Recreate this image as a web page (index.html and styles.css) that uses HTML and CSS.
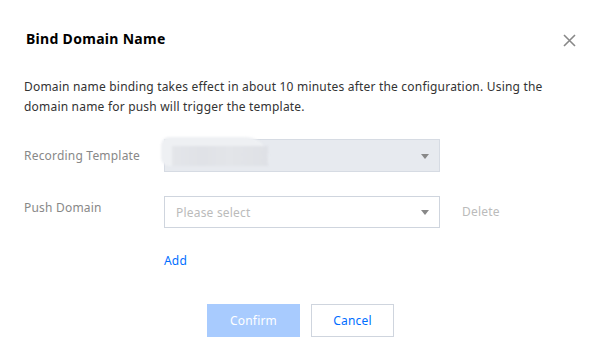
FILE: index.html
```html
<!DOCTYPE html>
<html>
<head>
<meta charset="utf-8">
<link rel="stylesheet" href="styles.css">
</head>
<body>
<div class="dialog">
  <div class="header">
    <h2 class="title">Bind Domain Name</h2>
    <button class="close" aria-label="Close">
      <svg width="13" height="13" viewBox="0 0 13 13"><path d="M1 1L12 12M12 1L1 12" stroke="#888" stroke-width="1.6" fill="none"/></svg>
    </button>
  </div>
  <p class="desc">Domain name binding takes effect in about 10 minutes after the configuration. Using the domain name for push will trigger the template.</p>
  <div class="form">
    <div class="row row-first">
      <div class="label label-first">Recording Template</div>
      <div class="select disabled">
        <span class="blur"><span class="blur-inner"></span></span>
        <span class="arrow"></span>
      </div>
    </div>
    <div class="row">
      <div class="label label-second">Push Domain</div>
      <div class="select">
        <span class="placeholder">Please select</span>
        <span class="arrow"></span>
      </div>
      <span class="delete">Delete</span>
    </div>
    <div class="row row-add">
      <div class="label"></div>
      <a class="add">Add</a>
    </div>
  </div>
  <div class="footer">
    <button class="btn btn-primary">Confirm</button>
    <button class="btn btn-default">Cancel</button>
  </div>
</div>
</body>
</html>
```
FILE: styles.css
```css
* { box-sizing: border-box; }
html, body { margin: 0; padding: 0; background: #fff; }
body { font-family: "Noto Sans", "Open Sans", sans-serif; font-size: 12px; color: #333; letter-spacing: 0.2px; }
.dialog { width: 604px; height: 364px; padding: 28px 24px 0 24px; }
.header { display: flex; justify-content: space-between; align-items: flex-start; }
.title { margin: 0 0 0 2px; font-size: 14px; line-height: 22px; font-weight: 700; color: #000; letter-spacing: 0.3px; }
.close { border: 0; background: none; padding: 0; margin: 6px 4px 0 0; width: 13px; height: 13px; display: block; }
.close svg { display: block; }
.desc { margin: 27px 0 0 0; line-height: 20px; color: #333; width: 540px; }
.form { margin-top: 22px; }
.row { display: flex; align-items: flex-start; }
.label { width: 140px; color: #888; line-height: 18px; }
.label-first { padding-top: 8px; }
.label-second { padding-top: 3px; }
.row + .row { margin-top: 24px; }
.select { position: relative; width: 276px; height: 32px; border: 1px solid #cfd5de; background: #fff; display: flex; align-items: center; padding-left: 11px; }
.disabled { background: #e7eaef; border-color: #d6dbe3; height: 33px; }
.blur { position: absolute; left: -4px; top: -3px; width: 108px; height: 29px; border-radius: 14px 40px 10px 14px; background: #eef0f3; filter: blur(1px); }
.blur-inner { position: absolute; left: 11px; top: 9px; width: 96px; height: 20px; background: linear-gradient(90deg, #e4e6ea 0%, #e0e2e7 30%, #e3e5e9 60%, #dfe1e6 100%); }
.placeholder { color: #bbb; }
.arrow { position: absolute; right: 10px; top: 50%; margin-top: -2px; width: 0; height: 0; border-left: 4.5px solid transparent; border-right: 4.5px solid transparent; border-top: 5px solid #888; }
.delete { color: #bbb; margin-left: 22px; line-height: 32px; }
.row-add { margin-top: 24px !important; }
.add { color: #006eff; line-height: 18px; cursor: pointer; }
.footer { display: flex; justify-content: center; gap: 11px; margin-top: 34px; padding-right: 3px; }
.btn { height: 33px; font-family: inherit; font-size: 12px; padding: 0; letter-spacing: 0.2px; }
.btn-primary { width: 93px; border: 0; background: #a8cbfe; color: #fff; }
.btn-default { width: 83px; border: 1px solid #cfd5de; background: #fff; color: #006eff; }
```
